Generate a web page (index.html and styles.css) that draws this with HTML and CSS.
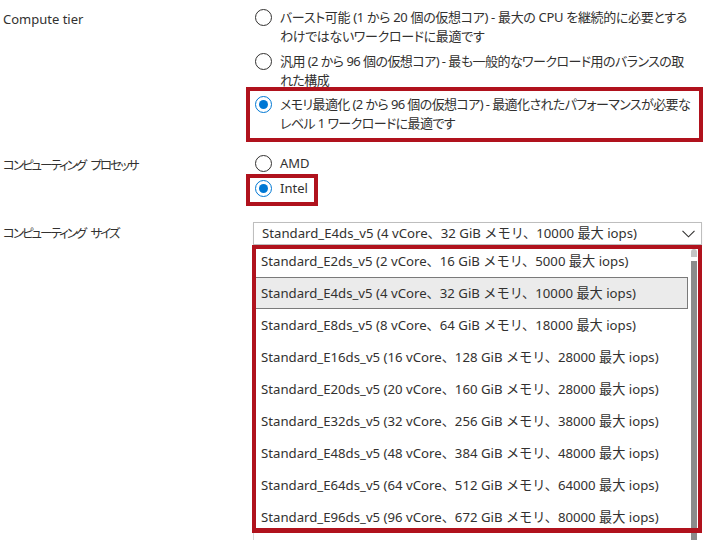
FILE: index.html
```html
<!DOCTYPE html>
<html lang="ja">
<head>
<meta charset="utf-8">
<link rel="stylesheet" href="styles.css">
</head>
<body>
<div class="form">
  <div class="row row-tier">
    <div class="label">Compute tier</div>
    <div class="control">
      <div class="opt opt-first">
        <span class="radio"></span>
        <span class="opt-text">バースト可能 (1 から 20 個の仮想コア) - 最大の CPU を継続的に必要とする<br>わけではないワークロードに最適です</span>
      </div>
      <div class="opt opt-second">
        <span class="radio"></span>
        <span class="opt-text tight">汎用 (2 から 96 個の仮想コア) - 最も一般的なワークロード用のバランスの取<br>れた構成</span>
      </div>
      <div class="opt opt-boxed-wide">
        <span class="radio checked"></span>
        <span class="opt-text tighter">メモリ最適化 (2 から 96 個の仮想コア) - 最適化されたパフォーマンスが必要な<br>レベル 1 ワークロードに最適です</span>
      </div>
    </div>
  </div>

  <div class="row row-proc">
    <div class="label label-ja">コンピューティング プロセッサ</div>
    <div class="control">
      <div class="opt opt-amd">
        <span class="radio"></span>
        <span class="opt-text latin">AMD</span>
      </div>
      <div class="opt opt-boxed-small">
        <span class="radio checked"></span>
        <span class="opt-text latin">Intel</span>
      </div>
    </div>
  </div>

  <div class="row row-size">
    <div class="label label-ja">コンピューティング サイズ</div>
    <div class="control">
      <div class="select">
        <span class="select-text">Standard_E4ds_v5 (4 vCore、32 GiB メモリ、10000 最大 iops)</span>
        <svg class="chevron" width="13" height="8" viewBox="0 0 13 8"><path d="M0.5 0.8 L6.5 6.8 L12.5 0.8" fill="none" stroke="#323130" stroke-width="1.1"/></svg>
      </div>
      <div class="list-wrap">
        <div class="list">
          <div class="items">
            <div class="item">Standard_E2ds_v5 (2 vCore、16 GiB メモリ、5000 最大 iops)</div>
            <div class="item item-hover">Standard_E4ds_v5 (4 vCore、32 GiB メモリ、10000 最大 iops)</div>
            <div class="item">Standard_E8ds_v5 (8 vCore、64 GiB メモリ、18000 最大 iops)</div>
            <div class="item">Standard_E16ds_v5 (16 vCore、128 GiB メモリ、28000 最大 iops)</div>
            <div class="item">Standard_E20ds_v5 (20 vCore、160 GiB メモリ、28000 最大 iops)</div>
            <div class="item">Standard_E32ds_v5 (32 vCore、256 GiB メモリ、38000 最大 iops)</div>
            <div class="item">Standard_E48ds_v5 (48 vCore、384 GiB メモリ、48000 最大 iops)</div>
            <div class="item">Standard_E64ds_v5 (64 vCore、512 GiB メモリ、64000 最大 iops)</div>
            <div class="item">Standard_E96ds_v5 (96 vCore、672 GiB メモリ、80000 最大 iops)</div>
          </div>
          <div class="scrollbar">
            <span class="sb-arrow"></span>
            <span class="sb-thumb"></span>
          </div>
        </div>
        <div class="highlight-box"></div>
      </div>
    </div>
  </div>
</div>
</body>
</html>
```

FILE: styles.css
```css
* { box-sizing: border-box; }
html, body {
  margin: 0;
  padding: 0;
  background: #ffffff;
}
body {
  width: 705px;
  height: 540px;
  overflow: hidden;
  font-family: "Noto Sans", "Noto Sans CJK JP", sans-serif;
  font-size: 13px;
  color: #323130;
}
.form {
  display: flex;
  flex-direction: column;
}
.row {
  display: grid;
  grid-template-columns: 246px 1fr;
}
.label {
  padding-left: 3px;
  line-height: 19px;
  white-space: nowrap;
}
.label-ja {
  font-size: 12.5px;
  font-feature-settings: "palt";
  letter-spacing: -2px;
  word-spacing: 4px;
}
.control {
  display: flex;
  flex-direction: column;
  align-items: flex-start;
}

/* radio options */
.opt {
  display: flex;
  align-items: flex-start;
  padding-left: 9px;
}
.opt-text {
  margin-left: 8px;
  line-height: 19px;
  white-space: nowrap;
  font-feature-settings: "palt";
  letter-spacing: -0.33px;
}
.opt-text.tight { letter-spacing: -0.55px; }
.opt-text.tighter { letter-spacing: -0.6px; }
.opt-text.latin {
  letter-spacing: 0;
}
.radio {
  flex: none;
  width: 17px;
  height: 17px;
  margin-top: 1px;
  border: 1px solid #323130;
  border-radius: 50%;
  display: flex;
  align-items: center;
  justify-content: center;
}
.radio.checked {
  border-color: #0078d4;
}
.radio.checked::after {
  content: "";
  width: 9px;
  height: 9px;
  border-radius: 50%;
  background: #0078d4;
}

/* row 1 */
.row-tier .label { padding-top: 10px; }
.opt-first { margin-top: 8px; }
.opt-second { margin-top: 6px; }
.opt-boxed-wide {
  margin-top: -3px;
  align-self: stretch;
  margin-right: 2px;
  border: 4px solid #b0121d;
  padding: 4px 0 5px 5px;
}

/* row 2 */
.row-proc .label { padding-top: 14px; }
.opt-amd { margin-top: 12px; }
.opt-boxed-small {
  margin-top: 1px;
  border: 4px solid #b0121d;
  padding: 1px 6px 4px 5px;
}

/* row 3 */
.row-size .label { padding-top: 18px; }
.select {
  margin-top: 16px;
  margin-left: 7px;
  width: 449px;
  height: 23px;
  border: 1px solid #bebebe;
  display: flex;
  align-items: center;
  justify-content: space-between;
  padding: 0 6px 0 8px;
  box-shadow: 0 1px 2px rgba(0,0,0,0.06);
}
.select-text {
  font-size: 13.2px;
  line-height: 19px;
  white-space: nowrap;
}
.chevron { display: block; }

.list-wrap {
  position: relative;
  margin-left: 7px;
  width: 449px;
  height: 300px;
}
.list {
  display: flex;
  height: 100%;
  border-left: 1px solid #d8d8d8;
  background: #ffffff;
  overflow: hidden;
}
.items {
  flex: 1;
  display: flex;
  flex-direction: column;
}
.item {
  height: 32px;
  line-height: 30px;
  font-size: 13.2px;
  padding-left: 6px;
  border: 1px solid transparent;
  white-space: nowrap;
}
.item-hover {
  background: #ebebeb;
  border-color: #7a7a7a;
}
.scrollbar {
  flex: none;
  width: 6px;
  margin-left: 3px;
  margin-right: 5px;
  padding-top: 4px;
  display: flex;
  flex-direction: column;
  gap: 4px;
}
.sb-arrow {
  height: 8px;
  background: #c4c4c4;
  border-radius: 3px 3px 0 0;
}
.sb-thumb {
  flex: 1;
  background: #8b8b8b;
}
.highlight-box {
  position: absolute;
  left: -1px;
  top: 0;
  width: 450px;
  height: 288px;
  border: 4px solid #b0121d;
  border-bottom-width: 5px;
  pointer-events: none;
}
```
